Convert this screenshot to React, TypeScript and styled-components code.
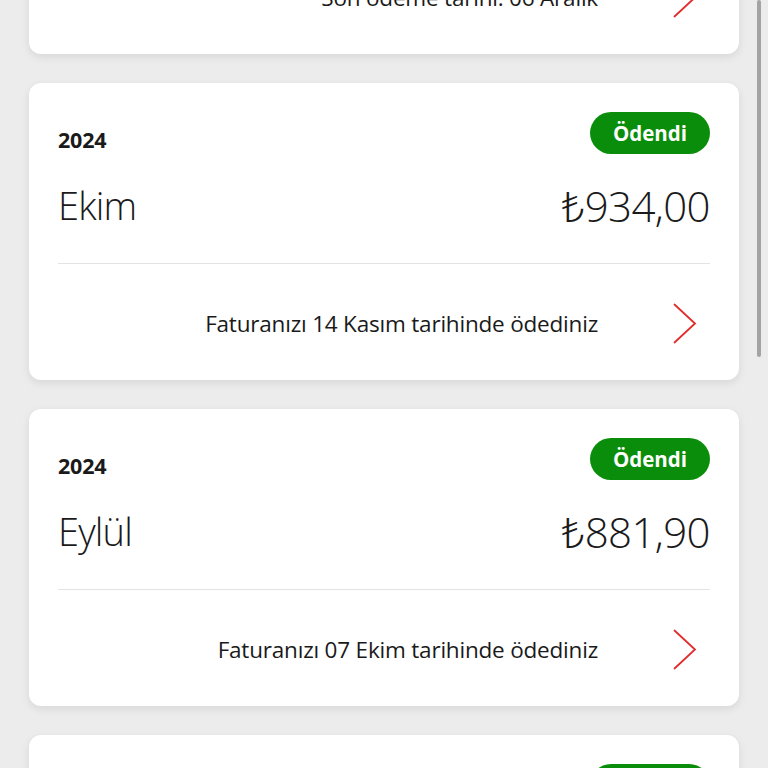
import React, { useLayoutEffect, useRef } from "react";
import styled, { createGlobalStyle } from "styled-components";

const Global = createGlobalStyle`
  html, body { margin: 0; padding: 0; background: #ececec; }
  body { font-family: "Open Sans", "Noto Sans", sans-serif; color: #1a1a1a; overflow: hidden; }
  * { box-sizing: border-box; }
`;

const Scroller = styled.div`
  height: 100vh;
  overflow-y: auto;
  background: #ececec;
  scrollbar-width: none;
  &::-webkit-scrollbar { display: none; }
`;

const List = styled.div`
  display: flex;
  flex-direction: column;
  gap: 29px;
  padding: 29px;
`;

const Card = styled.section`
  background: #ffffff;
  border-radius: 12px;
  box-shadow: 0 3px 8px rgba(0, 0, 0, 0.09);
  height: 297px;
  display: flex;
  flex-direction: column;
`;

const Top = styled.div`
  height: 181px;
  margin: 0 29px;
  padding-top: 29px;
  border-bottom: 1px solid #e3e3e3;
  display: flex;
  flex-direction: column;
`;

const HeaderRow = styled.div`
  display: flex;
  justify-content: space-between;
  align-items: center;
  height: 42px;
`;

const Year = styled.div`
  font-weight: 700;
  font-size: 21.5px;
  margin-top: 12px;
  letter-spacing: -0.2px;
`;

const Badge = styled.div<{ $tone: "paid" | "due" }>`
  height: 42px;
  padding: 0 23px;
  border-radius: 21px;
  background: ${(p) => (p.$tone === "paid" ? "#0a8d0a" : "#e60000")};
  color: #ffffff;
  font-weight: 700;
  font-size: 20.5px;
  display: flex;
  align-items: center;
  justify-content: center;
`;

const MainRow = styled.div`
  display: flex;
  justify-content: space-between;
  align-items: center;
  margin-top: 27px;
  height: 48px;
`;

const Month = styled.div`
  font-weight: 300;
  font-size: 38px;
  letter-spacing: -0.8px;
`;

const Amount = styled.div`
  font-weight: 300;
  font-size: 42px;
  letter-spacing: -0.6px;
`;

const Footer = styled.div`
  flex: 1;
  display: flex;
  align-items: center;
  justify-content: flex-end;
  gap: 75px;
  padding: 3px 42px 0 0;
`;

const Note = styled.div`
  font-size: 22.5px;
  font-weight: 400;
  letter-spacing: -0.2px;
`;

const Chevron = styled.svg`
  width: 24px;
  height: 41px;
  flex: none;
`;

const Thumb = styled.div`
  position: fixed;
  top: 0;
  right: 7px;
  width: 4px;
  height: 357px;
  border-radius: 2px;
  background: #a3a3a3;
`;

type Bill = {
  year: string;
  month: string;
  amount: string;
  paid: boolean;
  note: string;
};

const bills: Bill[] = [
  { year: "2024", month: "Kasım", amount: "₺912,40", paid: false, note: "Son ödeme tarihi: 06 Aralık" },
  { year: "2024", month: "Ekim", amount: "₺934,00", paid: true, note: "Faturanızı 14 Kasım tarihinde ödediniz" },
  { year: "2024", month: "Eylül", amount: "₺881,90", paid: true, note: "Faturanızı 07 Ekim tarihinde ödediniz" },
  { year: "2024", month: "Ağustos", amount: "₺865,30", paid: true, note: "Faturanızı 09 Eylül tarihinde ödediniz" },
];

export default function App() {
  const ref = useRef<HTMLDivElement>(null);
  useLayoutEffect(() => {
    if (ref.current) ref.current.scrollTop = 272;
  }, []);
  return (
    <>
      <Global />
      <Scroller ref={ref}>
        <List>
          {bills.map((b, i) => (
            <Card key={i}>
              <Top>
                <HeaderRow>
                  <Year>{b.year}</Year>
                  <Badge $tone={b.paid ? "paid" : "due"}>{b.paid ? "Ödendi" : "Ödenmedi"}</Badge>
                </HeaderRow>
                <MainRow>
                  <Month>{b.month}</Month>
                  <Amount>{b.amount}</Amount>
                </MainRow>
              </Top>
              <Footer>
                <Note>{b.note}</Note>
                <Chevron viewBox="0 0 24 41">
                  <path d="M1.5 1.5 L22 20.5 L1.5 39.5" fill="none" stroke="#e22b2b" strokeWidth="1.8" strokeLinecap="round" strokeLinejoin="miter" />
                </Chevron>
              </Footer>
            </Card>
          ))}
        </List>
      </Scroller>
      <Thumb />
    </>
  );
}
